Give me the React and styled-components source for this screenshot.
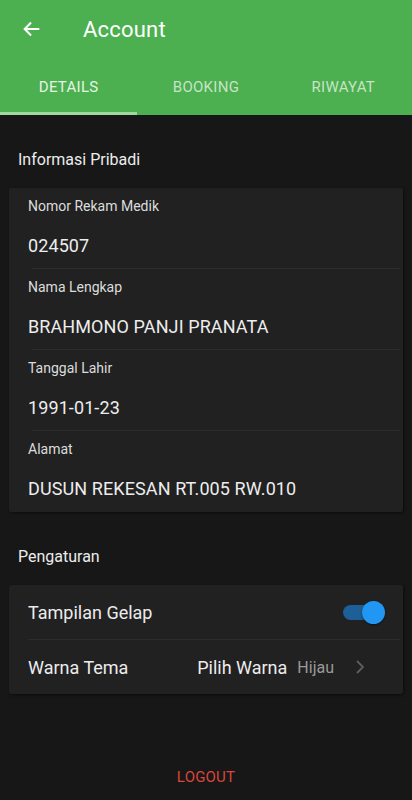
import React from "react";
import styled, { createGlobalStyle } from "styled-components";

const Global = createGlobalStyle`
  html, body { margin: 0; padding: 0; background: #171717; }
  body { font-family: Roboto, "Noto Sans", sans-serif; -webkit-font-smoothing: antialiased; }
`;

const Page = styled.div`
  width: 412px;
  min-height: 800px;
  background: #171717;
  display: flex;
  flex-direction: column;
`;

const Header = styled.header`
  background: #4caf50;
  display: flex;
  flex-direction: column;
`;

const Toolbar = styled.div`
  height: 58px;
  display: flex;
  align-items: center;
  padding-left: 21px;
  gap: 40px;
`;

const Title = styled.h1`
  margin: 0;
  font-size: 22px;
  font-weight: 400;
  color: #fff;
  letter-spacing: 0.2px;
`;

const Tabs = styled.nav`
  height: 57px;
  display: grid;
  grid-template-columns: repeat(3, 1fr);
`;

const Tab = styled.div`
  position: relative;
  display: flex;
  align-items: center;
  justify-content: center;
  font-size: 15px;
  font-weight: 400;
  letter-spacing: 0.3px;
  color: ${(p) => (p.$active ? "#e6f5e6" : "rgba(232,245,232,0.78)")};
  &::after {
    content: "";
    position: absolute;
    left: 0;
    right: 0;
    bottom: 0;
    height: 3px;
    background: ${(p) => (p.$active ? "#9ed99f" : "transparent")};
  }
`;

const SectionTitle = styled.div`
  padding: 34px 18px 0;
  margin-bottom: 17px;
  font-size: 16px;
  line-height: 22px;
  color: #ececec;
`;

const Card = styled.section`
  margin: 0 9px;
  background: #212121;
  border-radius: 2px;
  box-shadow: 1px 1px 3px rgba(0, 0, 0, 0.5);
  display: flex;
  flex-direction: column;
`;

const Item = styled.div`
  padding: 9px 19px ${(p) => (p.$last ? "11px" : "10px")};
  display: flex;
  flex-direction: column;
`;

const Label = styled.div`
  font-size: 14px;
  line-height: 18px;
  color: #dcdcdc;
`;

const Value = styled.div`
  margin-top: 19px;
  font-size: 18px;
  line-height: 24px;
  color: #ededed;
  letter-spacing: 0.1px;
`;

const Divider = styled.div`
  height: 1px;
  background: #2c2c2c;
  margin: 0 3px 0 ${(p) => p.$inset}px;
`;

const Row = styled.div`
  height: 54px;
  display: flex;
  align-items: center;
  padding: 0 18px 0 19px;
`;

const RowLabel = styled.div`
  flex: 1;
  font-size: 18px;
  color: #ececec;
`;

const RowAction = styled.div`
  font-size: 18px;
  color: #ececec;
  margin-right: 10px;
`;

const RowHint = styled.div`
  font-size: 16px;
  color: #9a9a9a;
  margin-right: 21px;
`;

const ChevronBox = styled.div`
  display: flex;
  margin-right: 20px;
`;

const Switch = styled.div`
  position: relative;
  width: 36px;
  height: 15px;
  border-radius: 8px;
  background: #1d5f97;
  margin-right: 6px;
`;

const Thumb = styled.div`
  position: absolute;
  right: -6px;
  top: -4px;
  width: 23px;
  height: 23px;
  border-radius: 50%;
  background: #2196f3;
  box-shadow: 0 1px 2px rgba(0, 0, 0, 0.5);
`;

const Logout = styled.button`
  margin: 73px auto 0;
  background: none;
  border: none;
  padding: 0;
  font-family: inherit;
  font-size: 15px;
  line-height: 20px;
  color: #d9463b;
  letter-spacing: 0.2px;
`;

const BackArrow = () => (
  <svg width="22" height="22" viewBox="0 0 24 24" fill="none">
    <path d="M20 12H4.5M11 5l-7 7 7 7" stroke="#fff" strokeWidth="2.2" />
  </svg>
);

const Chevron = () => (
  <svg width="10" height="16" viewBox="0 0 10 16" fill="none">
    <path d="M2 2l6 6-6 6" stroke="#5e5e5e" strokeWidth="1.8" />
  </svg>
);

const info = [
  ["Nomor Rekam Medik", "024507"],
  ["Nama Lengkap", "BRAHMONO PANJI PRANATA"],
  ["Tanggal Lahir", "1991-01-23"],
  ["Alamat", "DUSUN REKESAN RT.005 RW.010"],
];

export default function App() {
  return (
    <Page>
      <Global />
      <Header>
        <Toolbar>
          <BackArrow />
          <Title>Account</Title>
        </Toolbar>
        <Tabs>
          <Tab $active>DETAILS</Tab>
          <Tab>BOOKING</Tab>
          <Tab>RIWAYAT</Tab>
        </Tabs>
      </Header>

      <SectionTitle>Informasi Pribadi</SectionTitle>
      <Card>
        {info.map(([l, v], i) => (
          <React.Fragment key={l}>
            <Item $last={i === info.length - 1}>
              <Label>{l}</Label>
              <Value>{v}</Value>
            </Item>
            {i < info.length - 1 && <Divider $inset={23} />}
          </React.Fragment>
        ))}
      </Card>

      <SectionTitle>Pengaturan</SectionTitle>
      <Card>
        <Row>
          <RowLabel>Tampilan Gelap</RowLabel>
          <Switch>
            <Thumb />
          </Switch>
        </Row>
        <Divider $inset={19} />
        <Row>
          <RowLabel>Warna Tema</RowLabel>
          <RowAction>Pilih Warna</RowAction>
          <RowHint>Hijau</RowHint>
          <ChevronBox>
            <Chevron />
          </ChevronBox>
        </Row>
      </Card>

      <Logout>LOGOUT</Logout>
    </Page>
  );
}
